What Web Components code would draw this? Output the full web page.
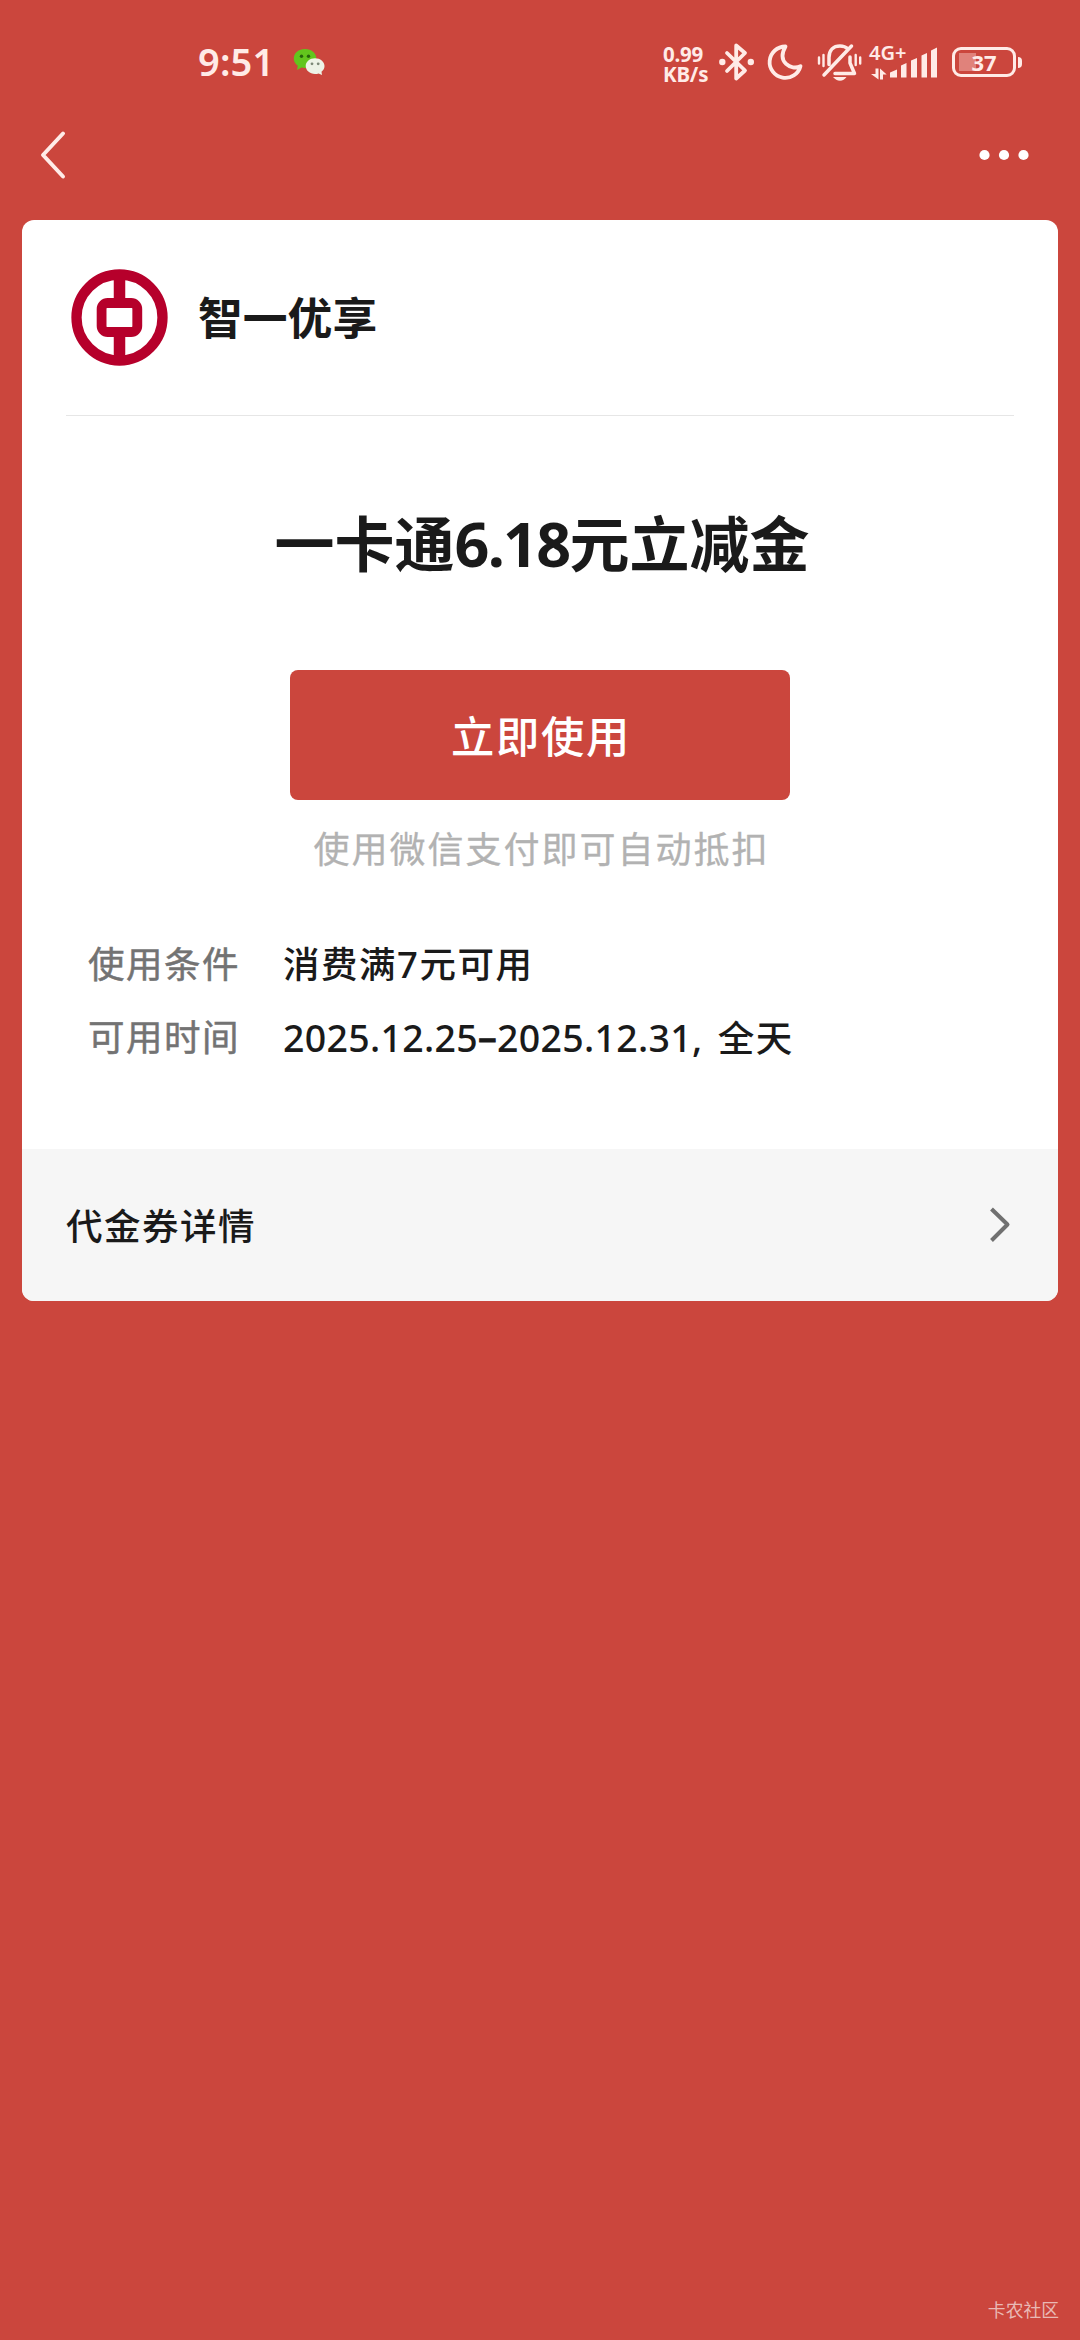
<!DOCTYPE html>
<html lang="zh-CN">
<head>
<meta charset="utf-8">
<title>代金券</title>
<style>
html,body{margin:0;padding:0}
body{width:1080px;height:2340px;background:#cb463d;overflow:hidden;font-family:"Noto Sans","Noto Sans CJK SC",sans-serif}
</style>
</head>
<body>
<coupon-page></coupon-page>
<script>
const define = (name, html) => customElements.define(name, class extends HTMLElement {
  constructor() {
    super();
    const t = document.createElement('template');
    t.innerHTML = html;
    this.attachShadow({ mode: 'open' }).append(t.content.cloneNode(true));
  }
});

define('status-bar', `
<style>
:host{display:flex;justify-content:space-between;height:126px;padding:0 58px 0 198px;box-sizing:border-box;color:#ffebe7;align-items:flex-start}
svg{display:block;flex:none}
.left,.right{display:flex;align-items:flex-start}
.time{font-size:38px;font-weight:600;line-height:52px;margin-top:35px;width:74px;letter-spacing:.2px;white-space:nowrap}
.wechat{margin:48px 0 0 21px}
.right{padding-top:40px}
.speed{font-size:20.500px;font-weight:700;line-height:19.500px;width:55px;margin-top:5px;letter-spacing:-.2px;white-space:nowrap}
.net{width:72px;margin-left:6px}
.net b{display:block;font-size:20px;line-height:26px;height:26px;font-weight:600}
.bat{display:flex;align-items:center;margin:7px 0 0 11px}
.cell{box-sizing:border-box;width:64px;height:30px;border:3px solid currentColor;border-radius:9px;display:flex;align-items:center;justify-content:center;font-size:22px;font-weight:700;line-height:24px;background:linear-gradient(#e0827b,#e0827b) 4px 3px/17px 18px no-repeat}
.nub{width:4px;height:11px;border-radius:0 4px 4px 0;background:currentColor;margin-left:2px}
</style>
<div class="left"><span class="time">9:51</span>
<svg class="wechat" width="33" height="30" viewBox="0 0 33 30">
<path d="M12 1C5.500 1 .8 5.100.8 10.500c0 3 1.500 5.500 4 7.300L4 22l4.500-2.400c1.100.3 2.300.5 3.500.5 6.500 0 11.300-4.200 11.300-9.600S18.500 1 12 1z" fill="#62c51d"/>
<circle cx="8.500" cy="8.300" r="1.700" fill="#26630c"/><circle cx="15.500" cy="8.300" r="1.700" fill="#26630c"/>
<path d="M22 10.200c-5.200 0-9.300 3.500-9.300 7.900S16.800 26 22 26c1.300 0 2.500-.2 3.600-.6L29 27l-.5-3.200c1.900-1.400 3-3.400 3-5.700 0-4.400-4.200-7.900-9.500-7.900z" fill="#edf3e7"/>
<circle cx="19" cy="15.800" r="1.400" fill="#7d8978"/><circle cx="25.200" cy="15.800" r="1.400" fill="#7d8978"/>
</svg></div>
<div class="right">
<div class="speed">0.99<br>KB/s</div>
<svg width="145" height="44" viewBox="715 40 145 44" fill="none" stroke="currentColor" stroke-width="3.800" stroke-linejoin="round" stroke-linecap="round">
<path d="M724 53L742 70.500L733.200 78.500V45.500L742 53L724 71"/>
<circle cx="719.300" cy="62" r="3.200" fill="currentColor" stroke="none"/><circle cx="747.800" cy="62" r="3.200" fill="currentColor" stroke="none"/>
<path d="M782.500 46.500A15.700 15.700 0 1 0 797.500 66.200C788 71 773.500 62 782.500 46.500Z"/>
<path d="M826 64.500V57.500C826 50 830.500 46 837 46c3.500 0 6 1 8 3M847 57V63L851.500 73.500H832M848.500 46L821 75" stroke-width="3.500"/>
<path d="M830 77H843.500Q841 80.700 837 80.700T830 77Z" fill="currentColor" stroke="none"/>
<path d="M816 57.500V63.500M820.500 55V66M852.700 55V65M857.200 57.500V63.500" stroke-width="2.400"/>
</svg>
<div class="net"><b>4G+</b>
<svg width="70" height="15" viewBox="870 63 70 15" fill="currentColor">
<path d="M876.500 65.500h3v11L872 71h4.500zM881 76.500h3V71.500h3.700L881 65.500z"/>
</svg>
</div>
<div class="bat"><span class="cell">37</span><i class="nub"></i></div>
</div>`);

define('signal-bars', `
<style>:host{display:block}svg{display:block}</style>
<svg width="48" height="31" viewBox="890 47 48 31" fill="#ffebe7"><path d="M890 77.500v-5l7-3v8zM901 77.500v-12l5.500-2.500v14.500zM911 77.500v-17l6-2.500v19.500zM921.500 77.500v-22l5.500-2.500v24.500zM931 77.500v-27l6-3v30z"/></svg>`);

define('nav-bar', `
<style>
:host{display:flex;justify-content:space-between;align-items:center;height:58px;padding:0 50px 0 38px}
svg{display:block}
</style>
<svg width="30" height="50" viewBox="0 0 30 50" fill="none" stroke="#ffebe7" stroke-width="4" stroke-linecap="round" stroke-linejoin="round"><path d="M25 3.500L5 25L25 46.500"/></svg>
<svg width="52" height="12" viewBox="0 0 52 12" fill="#fff"><circle cx="6.500" cy="6" r="5.100"/><circle cx="26" cy="6" r="5.100"/><circle cx="45.500" cy="6" r="5.100"/></svg>`);

define('merchant-header', `
<style>
:host{display:flex;align-items:center;height:195px;margin:0 44px;border-bottom:1px solid #e6e6e6;box-sizing:content-box}
svg{display:block;margin:-1px 0 0 5px}
span{font-size:44.800px;line-height:60px;font-weight:700;margin:1px 0 0 30px;color:#1a1a1a}
</style>
<svg width="97" height="97" viewBox="0 0 97 97" fill="none" stroke="#b6002b">
<circle cx="48.500" cy="48.500" r="43" stroke-width="10.300"/>
<path d="M48.500 8V34M48.500 62V89" stroke-width="11.500"/>
<rect x="30.700" y="34" width="35.500" height="29" rx="6" stroke-width="10"/>
<rect x="35.700" y="39" width="25.500" height="19" fill="#fff" stroke="none"/>
</svg>
<span><slot></slot></span>`);

define('use-button', `
<style>
:host{display:flex;align-items:center;justify-content:center;width:500px;height:130px;border-radius:8px;background:#cb463d;color:#fff;font-size:43.300px;font-weight:500;line-height:60px;letter-spacing:1.700px;padding:3px 0 0 2px;box-sizing:border-box}
</style><slot></slot>`);

define('info-row', `
<style>
:host{display:flex;height:73px;line-height:73px;font-size:36.500px;letter-spacing:1.500px;color:#1a1a1a;white-space:nowrap;font-weight:500}
.label{width:195px;color:#737373;font-weight:400;-webkit-text-stroke:.5px #737373}
</style><span class="label"><slot name="label"></slot></span><span><slot></slot></span>`);

define('detail-link', `
<style>
:host{display:flex;align-items:center;justify-content:space-between;height:152px;padding:0 47px 0 44px;background:#f6f6f6;color:#1a1a1a;font-size:36.500px;letter-spacing:1.500px;font-weight:500}
svg{display:block}
span{margin-top:-2px}
</style><span><slot></slot></span>
<svg width="22" height="38" viewBox="0 0 22 38" fill="none" stroke="#707070" stroke-width="4"><path d="M2.500 3L18.500 18.500L2.500 34.500" stroke-linejoin="round"/></svg>`);

define('coupon-card', `
<style>
:host{display:flex;flex-direction:column;margin:36px 22px 0;height:1081px;border-radius:12px;overflow:hidden;background:#fff}
.hero{display:flex;flex-direction:column;align-items:center}
h1{margin:87px 0 0 4px;height:82px;line-height:82px;font-size:60px;font-weight:700;color:#1a1a1a;white-space:nowrap}
h1 span{font-size:61px;letter-spacing:-1.700px}
use-button{margin-top:85px}
.hint{height:50px;line-height:50px;margin:25px 0 0 3px;font-size:36px;letter-spacing:2px;color:#b2b2b2;-webkit-text-stroke:.3px #b2b2b2}
.rows{margin:53px 66px 0 66px}
detail-link{margin-top:auto}
.num{letter-spacing:.3px;font-size:37.500px;margin-right:5px}
.num i{font-style:normal;position:relative;top:-1.500px;-webkit-text-stroke:.8px #1a1a1a}
</style>
<merchant-header>智一优享</merchant-header>
<div class="hero">
<h1>一卡通<span>6.18</span>元立减金</h1>
<use-button>立即使用</use-button>
<div class="hint">使用微信支付即可自动抵扣</div>
</div>
<div class="rows">
<info-row><span slot="label">使用条件</span>消费满7元可用</info-row>
<info-row><span slot="label">可用时间</span><span class="num">2025.12.25<i>–</i>2025.12.31, </span>全天</info-row>
</div>
<detail-link>代金券详情</detail-link>`);

define('coupon-page', `
<style>
:host{display:flex;flex-direction:column;position:relative;width:1080px;height:2340px;background:#cb463d}
signal-bars{position:absolute;left:890px;top:47px}
footer{margin-top:auto;padding:0 21px 16px 0;text-align:right;font-size:17.800px;line-height:28px;color:#e9b9b5}
</style>
<status-bar></status-bar>
<signal-bars></signal-bars>
<nav-bar></nav-bar>
<coupon-card></coupon-card>
<footer>卡农社区</footer>`);
</script>
</body>
</html>
